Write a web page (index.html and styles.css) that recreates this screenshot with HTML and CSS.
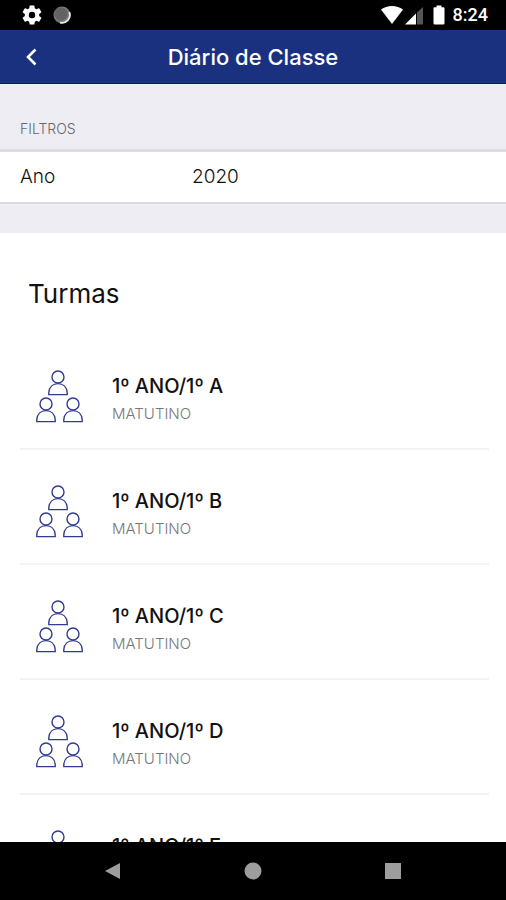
FILE: index.html
```html
<!DOCTYPE html>
<html lang="pt-BR">
<head>
<meta charset="utf-8">
<meta name="viewport" content="width=device-width, initial-scale=1">
<title>Diário de Classe</title>
<link rel="stylesheet" href="styles.css">
</head>
<body>
<svg class="sprite" aria-hidden="true">
  <symbol id="person" viewBox="0 0 20 26">
    <circle cx="10" cy="7" r="6"/>
    <path d="M.8 24.600V22.500C1.300 17 5 13.600 10 13.600S18.700 17 19.200 22.500V24.600Z"/>
  </symbol>
  <symbol id="group" viewBox="0 0 48 54">
    <use href="#person" x="12" y="1" width="20" height="26"/>
    <use href="#person" x="0" y="28" width="20" height="26"/>
    <use href="#person" x="27" y="28" width="20" height="26"/>
  </symbol>
</svg>
<div class="app">
  <div class="status">
    <div class="status-left">
      <svg width="20" height="20" viewBox="2 2 20 20" aria-hidden="true"><path fill="#fff" d="M19.140 12.940c.040-.300.060-.610.060-.940s-.020-.640-.070-.940l2.030-1.580a.49.49 0 0 0 .120-.610l-1.920-3.320a.49.49 0 0 0-.590-.220l-2.390.960a7 7 0 0 0-1.620-.940l-.360-2.540A.48.48 0 0 0 13.920 2.400h-3.840a.48.48 0 0 0-.470.410l-.360 2.540a7.300 7.300 0 0 0-1.620.940l-2.390-.960a.48.48 0 0 0-.590.220L2.740 8.870a.48.48 0 0 0 .120.610l2.030 1.580a6 6 0 0 0 0 1.880l-2.030 1.580a.49.49 0 0 0-.120.610l1.920 3.320c.120.220.370.290.590.220l2.390-.960c.500.380 1.030.700 1.620.940l.360 2.540c.050.240.240.410.480.410h3.840c.240 0 .440-.170.470-.410l.360-2.540a7 7 0 0 0 1.620-.940l2.390.960c.220.080.470 0 .590-.220l1.920-3.320a.48.48 0 0 0-.120-.610zM12 15.200a3.200 3.200 0 1 1 0-6.400 3.200 3.200 0 0 1 0 6.400z"/></svg>
      <svg width="18" height="18" viewBox="0 0 18 18" aria-hidden="true"><circle cx="9" cy="9" r="8.500" fill="#777"/><path d="M16.300 6A8 8 0 0 1 7 16.700" fill="none" stroke="#e6e6e6" stroke-width="1.800"/><circle cx="8" cy="8" r="6.500" fill="#636363"/></svg>
    </div>
    <div class="status-right">
      <svg width="46" height="20" viewBox="0 0 46 20" aria-hidden="true">
        <path fill="#fff" d="M0 4.500C6-.300 16-.300 22 4.500L11 19Z"/>
        <path fill="#fff" d="M24 19.500 35 8.500V19.500Z"/>
        <path fill="#555" d="M36 7.500 42 2V19.500H36Z"/>
      </svg>
      <svg class="battery" width="12" height="20" viewBox="0 0 12 20" aria-hidden="true"><path fill="#fff" d="M3.500 2.200V.500h5v1.700h1.700q1.300 0 1.300 1.300v14.700q0 1.300-1.300 1.300H1.800Q.500 19.500.500 18.200V3.500q0-1.300 1.300-1.300Z"/></svg>
      <span class="clock">8:24</span>
    </div>
  </div>
  <header class="bar">
    <button class="back" type="button" aria-label="Voltar"><svg width="12" height="18" viewBox="0 0 12 18"><path d="M9.500 1.500 2 9l7.500 7.500" fill="none" stroke="#fff" stroke-width="2.600"/></svg></button>
    <h1>Diário de Classe</h1>
  </header>
  <main>
    <section class="filters">
      <h2>FILTROS</h2>
      <button class="filter" type="button"><span>Ano</span><span>2020</span></button>
    </section>
    <section class="classes">
      <h2>Turmas</h2>
      <ul>
        <li><a href="#a"><svg class="group"><use href="#group"/></svg><span class="text"><strong>1º ANO/1º A</strong><small>MATUTINO</small></span></a></li>
        <li><a href="#b"><svg class="group"><use href="#group"/></svg><span class="text"><strong>1º ANO/1º B</strong><small>MATUTINO</small></span></a></li>
        <li><a href="#c"><svg class="group"><use href="#group"/></svg><span class="text"><strong>1º ANO/1º C</strong><small>MATUTINO</small></span></a></li>
        <li><a href="#d"><svg class="group"><use href="#group"/></svg><span class="text"><strong>1º ANO/1º D</strong><small>MATUTINO</small></span></a></li>
        <li><a href="#e"><svg class="group"><use href="#group"/></svg><span class="text"><strong>1º ANO/1º E</strong><small>MATUTINO</small></span></a></li>
      </ul>
    </section>
  </main>
  <nav class="system">
    <button type="button" aria-label="Voltar"><svg width="18" height="18" viewBox="0 0 18 18"><path d="M16 1V17L1 9Z"/></svg></button>
    <button type="button" aria-label="Início"><svg width="18" height="18" viewBox="0 0 18 18"><circle cx="9" cy="9" r="8.500"/></svg></button>
    <button type="button" aria-label="Recentes"><svg width="18" height="18" viewBox="0 0 18 18"><path d="M1 1H17V17H1Z"/></svg></button>
  </nav>
</div>
</body>
</html>
```
FILE: styles.css
```css
* { box-sizing: border-box; }
body { margin: 0; font-family: Inter, "Open Sans", sans-serif; color: #111; background: #fff; }
h1, h2, ul { margin: 0; padding: 0; font-weight: 400; }
button { border: 0; padding: 0; background: none; font: inherit; color: inherit; }
svg { display: block; flex: none; }
.sprite { position: absolute; width: 0; height: 0; }
.app { display: flex; flex-direction: column; height: 100vh; }
.status { flex: none; display: flex; justify-content: space-between; height: 30px; padding: 0 18px 0 22px; background: #000; }
.status-left { display: flex; align-items: center; gap: 11px; }
.status-right { display: flex; align-items: center; }
.battery { margin-left: 6px; }
.clock { margin-left: 8px; font: 500 18px/20px Roboto, sans-serif; color: #fff; }
.bar { flex: none; display: grid; grid-template-columns: 64px 1fr 64px; align-items: center; height: 54px; background: #19317f; border-bottom: 1px solid #0b1a6b; color: #fff; }
.bar h1 { font-size: 22px; line-height: 28px; font-weight: 500; text-align: center; }
.back { display: flex; align-items: center; justify-content: center; height: 52px; }
main { flex: 1; min-height: 0; overflow: hidden; }
.filters { padding: 35px 0 29px; background: #eeedf3; }
.filters h2 { padding: 0 20px 10px; font-size: 14px; line-height: 20px; font-weight: 300; color: #66666e; }
.filter { display: grid; grid-template-columns: 172px 1fr; width: 100%; padding: 13px 20px; border-top: 3px solid #dddce2; border-bottom: 2px solid #dad9dd; background: #fff; font-size: 19px; line-height: 24px; font-weight: 300; text-align: left; }
.classes > h2 { padding: 43px 28px 0; font-size: 26px; line-height: 36px; }
ul { padding: 23px 17px 0 20px; list-style: none; }
li { border-bottom: 2px solid #f3f3f3; }
li a { display: flex; align-items: center; gap: 28px; height: 113px; padding: 8px 16px 0; color: inherit; text-decoration: none; }
.group { width: 48px; height: 54px; fill: none; stroke: #303b91; stroke-width: 1.400; }
.text { display: flex; flex-direction: column; gap: 4px; padding-top: 8px; }
strong { font-size: 20px; line-height: 24px; font-weight: 500; }
small { font-size: 15px; line-height: 24px; font-weight: 300; color: #777; }
.system { flex: none; display: flex; justify-content: center; gap: 122px; height: 58px; background: #000; }
.system button { display: flex; align-items: center; }
.system svg { fill: #9d9d9d; }
```
